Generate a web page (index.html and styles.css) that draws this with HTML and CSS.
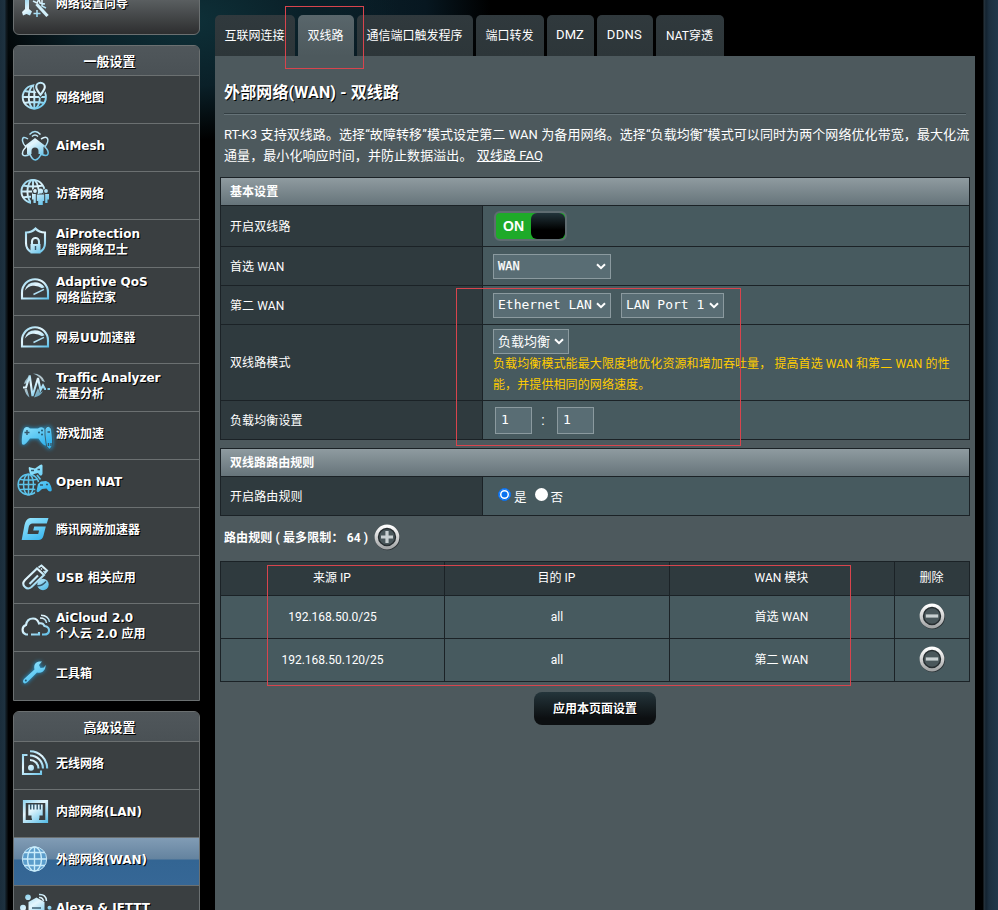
FILE: index.html
```html
<!DOCTYPE html>
<html lang="zh-CN">
<head>
<meta charset="utf-8">
<title>外部网络(WAN) - 双线路</title>
<link rel="stylesheet" href="styles.css">
</head>
<body>
<svg class="defs" width="0" height="0" aria-hidden="true">
  <defs>
    <linearGradient id="ice" gradientUnits="userSpaceOnUse" x1="24" y1="8" x2="42" y2="36">
      <stop offset="0" stop-color="#7fcdec"/><stop offset=".45" stop-color="#e4f6fd"/><stop offset="1" stop-color="#5cbfe8"/>
    </linearGradient>
    <linearGradient id="iceGlobe" gradientUnits="userSpaceOnUse" x1="-8" y1="-12" x2="8" y2="12">
      <stop offset="0" stop-color="#8fd3ee"/><stop offset=".45" stop-color="#dff4fc"/><stop offset="1" stop-color="#5cc4ec"/>
    </linearGradient>
    <linearGradient id="aqua" gradientUnits="userSpaceOnUse" x1="24" y1="8" x2="40" y2="36">
      <stop offset="0" stop-color="#a5ecff"/><stop offset="1" stop-color="#34b4ee"/>
    </linearGradient>
    <linearGradient id="steel" x1="0" y1="0" x2="0" y2="1">
      <stop offset="0" stop-color="#ffffff"/><stop offset="1" stop-color="#a4a6a7"/>
    </linearGradient>
    <symbol id="globe" viewBox="-14 -14 28 28">
      <circle r="11.6"/><ellipse rx="5.6" ry="11.6"/><path d="M0-11.6V11.6M-11.6 0H11.6M-10-6Q0-4 10-6M-10 6Q0 4 10 6"/>
    </symbol>
    <symbol id="gauge" viewBox="18 0 36 46">
      <path class="l2" d="M22 31.5V25.5A13 13.3 0 0 1 48 25.5V31.5Z"/>
      <path class="f" d="M24.8 23.5Q27 15.2 35 15.2Q41 15.2 44.6 20.2L42 21.2Q37.5 18.2 32.5 18.8Q28 19.5 24.8 23.5Z"/>
      <path class="l" d="M33.5 27.5L44 22.3"/>
    </symbol>
  </defs>
</svg>
<div class="page">
  <aside class="sidebar">
    <div class="quick">
      <svg class="ico" viewBox="18 0 36 46"><path class="f" d="M25 10H29V23L32 25.5L30 29.5L26.5 28L23 29.5L22 26L25 23Z"/><path class="w" d="M36.5 18L47.5 30"/><path class="l" d="M33 15L37 17L39 13L40 17L45 18M37 24V31M33.5 27.5H40.5M42 12V20L46 22"/></svg>
      <span>网络设置向导</span>
    </div>

    <nav class="menu">
      <h2>一般设置</h2>
      <a class="item"><svg class="ico" viewBox="18 0 36 46"><use class="gl" href="#globe" x="20.3" y="8" width="28" height="28"/><path class="pin" d="M40.5 23C36.5 18 34 15.5 34 12A6.5 6.5 0 0 1 47 12C47 15.5 44.5 18 40.5 23Z"/><path class="l2" d="M40.5 19.8C37.5 16 36.2 14 36.2 12A4.3 4.3 0 0 1 44.8 12C44.8 14 43.5 16 40.5 19.8Z"/></svg><span>网络地图</span></a>
      <a class="item"><svg class="ico" viewBox="18 0 36 46"><path class="l" d="M29.5 11.5Q35 5.5 40.5 11.5M32 13.5Q35 10.5 38 13.5"/><path class="l" d="M28 16Q22 12 22.5 18Q23 21 26 24Q21 29 23 32Q25 34 30 31Q32 37 35.5 37Q39 36 41 31Q47 34 48 31Q49 28 45 24Q49 18 47.5 15.5Q46 13 41 16"/><path class="f" d="M24.5 23L35 15L45.5 23L43.5 24V31H38.5V28A3.5 3.5 0 0 0 31.5 28V31H27V24Z"/></svg><span>AiMesh</span></a>
      <a class="item"><svg class="ico" viewBox="18 0 36 46"><use class="gl" href="#globe" x="19" y="6.5" width="28" height="28"/><g class="cut"><circle cx="35" cy="20.5" r="3"/><circle cx="46" cy="20.5" r="3"/><path d="M31 23H49V33H31Z"/></g><g class="f"><circle cx="35" cy="20" r="1.9"/><circle cx="46" cy="20" r="1.9"/><circle cx="40.5" cy="20" r="2.6"/><path d="M36.8 23.5H44.2V30H42.8V34H38.2V30H36.8ZM32 23H35.8V32H33.5V28.5H32ZM45.2 23H49V28.5H47.5V32H45.2Z"/></g></svg><span>访客网络</span></a>
      <a class="item"><svg class="ico" viewBox="18 0 36 46"><path class="l2" d="M31 33Q26 30 26 24V13.5Q32 13.5 35.5 9.5Q39 13.5 45 13.5V24Q45 30 40 33"/><path class="l2" d="M32 25V22.5A3.5 3.5 0 0 1 39 22.5V25"/><path class="f" d="M30.5 25H40.5V34.5H30.5Z"/><path class="dark" d="M35.5 27V31"/></svg><span>AiProtection<br>智能网络卫士</span></a>
      <a class="item"><svg class="ico"><use href="#gauge"/></svg><span>Adaptive QoS<br>网络监控家</span></a>
      <a class="item"><svg class="ico"><use href="#gauge"/></svg><span>网易UU加速器</span></a>
      <a class="item"><svg class="ico" viewBox="18 0 36 46"><path class="f dim" d="M33 10.5Q42 10.5 45 19L42 18Q40 13 33 10.5ZM24.5 26H27L29.5 34.5Q25 31 24.5 26ZM34 34.5L38 25L40 30L43 28Q41 33 34 34.5ZM28 14L25 18L24 21L27 20Z"/><path class="l2" d="M23 24.5H26L29.7 12.5L32.5 33L38 15L40.5 27L43 22.5L45 26H46M47.5 26H50"/></svg><span>Traffic Analyzer<br>流量分析</span></a>
      <a class="item"><svg class="ico glow" viewBox="18 0 36 46"><path class="a" d="M22 33C21.5 27 22.5 20 24.5 17Q27 15 30 17.5H38Q42 15 44.5 18C47 23 47 29 46.5 34Q44 36 38.5 27.5H30Q24 36 22 33Z"/><path class="a edge" d="M45 24V18Q48 12.5 51.5 18L52.5 28V34Q51 38 49.5 38Q46 37 46 32Z"/><path class="dark" d="M24.5 21.5H29.5M27 19V24M47.5 21H50M48.5 32V35M51 32V35"/><circle class="darkf" cx="39" cy="21.5" r="1"/><circle class="darkf" cx="42" cy="19.5" r="1"/><circle class="darkf" cx="42" cy="23.5" r="1"/></svg><span>游戏加速</span></a>
      <a class="item"><svg class="ico" viewBox="18 0 36 46"><use class="al" href="#globe" x="16" y="13" width="25" height="25"/><path class="cut" d="M36 24L46 20L52 33L35 34Z"/><path class="a" d="M29 11Q28 7 30.5 8.5L35 9.5L40 6Q43 4 42.5 8.5L42.5 15Q41 19 38 14L34 15Q30 18 29 11Z"/><path class="a" d="M38 25L41 22.5L46 22L49 23.5Q52.5 29 51.5 32Q49 33.5 46.5 29.5L42 30Q37.5 35 36.5 32Z"/><path class="al" d="M37 16L40.5 20.5"/><path class="dark" d="M31 11.5H34M37.5 10.5H40M40 26H43M46 25.5H48"/></svg><span>Open NAT</span></a>
      <a class="item"><svg class="ico" viewBox="18 0 36 46"><path class="g" d="M30 11H48.5L46.8 16.5H32.5Q29.5 16.5 28.7 20L27.5 27H38.2L39.1 23.5H33.2L34.2 19.5H45.8L43.4 29Q42.2 33 38.5 33H21.7L24.5 18Q25.7 12 30 11Z"/></svg><span>腾讯网游加速器</span></a>
      <a class="item"><svg class="ico" viewBox="18 0 36 46"><path class="l2" d="M25 25L37 13.5L44 20L31.5 32Q28 35 25 32Q21.5 29 25 25ZM38.5 12.5L41.5 10.5L47 15.5L44.5 18.5"/><path class="l2" d="M29.5 29L38 20.5"/><path class="l" d="M41 13.5L42 14.5M43.5 16L44.5 17"/><circle class="f" cx="43" cy="29.5" r="5.7"/><path class="dark" d="M36.5 30.5Q41 32 46 26.5"/></svg><span>USB 相关应用</span></a>
      <a class="item"><svg class="ico" viewBox="18 0 36 46"><path class="l2" d="M28 31.5H26A5 5 0 0 1 26 22Q27 15.5 33 15.5Q37.5 15.5 39 20.5Q43 19.5 44.5 23Q49.5 24 49 28Q48.5 31.5 44 31.5H42M31 31.5H39V29"/><path class="l" d="M40 15Q46 15 46.5 20M41 12.2Q48.5 12.5 49.5 19"/></svg><span>AiCloud 2.0<br>个人云 2.0 应用</span></a>
      <a class="item"><svg class="ico glow" viewBox="18 0 36 46"><path class="a" d="M24 28L34.5 18.5Q33 12 39 10.5L42 10.5L39 14L40.5 17L44 16.5L45.5 14Q46 18.5 43 20.5Q40 22.5 37 21.5L27.5 31Q25 33.5 23.3 31.5Q22.5 29.8 24 28Z"/><circle class="darkf" cx="25.8" cy="29.6" r="1"/></svg><span>工具箱</span></a>
    </nav>

    <nav class="menu last">
      <h2>高级设置</h2>
      <a class="item"><svg class="ico" viewBox="18 0 36 46"><path class="l2" d="M27.5 14H23V33H41V29.5"/><path class="l2" d="M30 10.3A17.2 17.2 0 0 1 47.2 27.5M30 14.5A13 13 0 0 1 43 27.5M30 19A8.5 8.5 0 0 1 38.5 27.5"/><circle class="f" cx="31" cy="26.8" r="3"/></svg><span>无线网络</span></a>
      <a class="item"><svg class="ico" viewBox="18 0 36 46"><path class="w2" d="M24.3 12.5H46.7V32.5H24.3Z"/><path class="f" d="M28.3 15.5H42.7V26.5H39.5V29.5H31.5V26.5H28.3Z"/><path class="dark" d="M30.7 15V20.5M33.8 15V20.5M37.2 15V20.5M40.3 15V20.5"/><path class="f" d="M32 29H39V33H32Z"/></svg><span>内部网络(LAN)</span></a>
      <a class="item active"><svg class="ico" viewBox="18 0 36 46"><circle class="disc" cx="34.5" cy="22" r="12.2"/><path class="net" d="M34.5 10V34M22.5 22H46.5M24 15.5H45M24 28.5H45"/><ellipse class="net" cx="34.5" cy="22" rx="7" ry="12"/></svg><span>外部网络(WAN)</span></a>
      <a class="item"><svg class="ico" viewBox="18 0 36 46"><circle class="f" cx="28" cy="12.3" r="2.8"/><circle class="f" cx="23" cy="22.8" r="3"/><circle class="f" cx="49.5" cy="22.8" r="2"/><path class="f" d="M28.5 17L36.5 12.5L44.5 17V30H28.5Z"/><path class="dark" d="M32 23H41"/><path class="l" d="M39 9.5Q46 9 46.5 16M39 12.5Q42.5 12 43.5 16"/></svg><span>Alexa &amp; IFTTT</span></a>
    </nav>
  </aside>

  <main class="main">
    <div class="tabs">
      <a class="tab t1">互联网连接</a><a class="tab t2 on">双线路</a><a class="tab t3">通信端口触发程序</a><a class="tab t4">端口转发</a><a class="tab t5">DMZ</a><a class="tab t6">DDNS</a><a class="tab t7">NAT穿透</a>
    </div>
    <section class="panel">
      <h1>外部网络(WAN) - 双线路</h1>
      <p class="desc">RT-K3 支持双线路。选择“故障转移”模式设定第二 WAN 为备用网络。选择“负载均衡”模式可以同时为两个网络优化带宽，最大化流<br>通量，最小化响应时间，并防止数据溢出。 <a class="faq">双线路 FAQ</a></p>

      <div class="form">
        <div class="head">基本设置</div>
        <div class="row r40"><div class="label">开启双线路</div><div class="val"><div class="switch"><span>ON</span><i></i></div></div></div>
        <div class="row r38"><div class="label">首选 WAN</div><div class="val"><div class="select s1 small">WAN<svg viewBox="0 0 10 7"><path d="M1 1.2L5 5.2L9 1.2"/></svg></div></div></div>
        <div class="row r38"><div class="label">第二 WAN</div><div class="val"><div class="select s1">Ethernet LAN<svg viewBox="0 0 10 7"><path d="M1 1.2L5 5.2L9 1.2"/></svg></div><div class="select s2">LAN Port 1<svg viewBox="0 0 10 7"><path d="M1 1.2L5 5.2L9 1.2"/></svg></div></div></div>
        <div class="row r75"><div class="label">双线路模式</div><div class="val col"><div class="select s3">负载均衡<svg viewBox="0 0 10 7"><path d="M1 1.2L5 5.2L9 1.2"/></svg></div><p class="hint">负载均衡模式能最大限度地优化资源和增加吞吐量， 提高首选 WAN 和第二 WAN 的性<br>能，并提供相同的网络速度。</p></div></div>
        <div class="row r38"><div class="label">负载均衡设置</div><div class="val ratio"><div class="num">1</div><b>:</b><div class="num">1</div></div></div>
      </div>

      <div class="form second">
        <div class="head">双线路路由规则</div>
        <div class="row r38"><div class="label">开启路由规则</div><div class="val radios"><i class="radio checked"></i><span>是</span><i class="radio"></i><span>否</span></div></div>
      </div>

      <div class="caption"><span>路由规则 ( 最多限制： 64 )</span>
        <svg class="round" viewBox="0 0 28 28"><circle class="shade" cx="14.6" cy="14.8" r="11.6"/><circle class="inner" cx="14" cy="14" r="10"/><circle class="ring" cx="14" cy="14" r="10.8"/><path class="mark" d="M8 14H20M14 8V20"/></svg>
      </div>

      <div class="rules">
        <div class="rr rh"><div>来源 IP</div><div>目的 IP</div><div>WAN 模块</div><div>删除</div></div>
        <div class="rr"><div class="lat">192.168.50.0/25</div><div class="lat">all</div><div>首选 WAN</div><div><svg class="round" viewBox="0 0 28 28"><circle class="shade" cx="14.6" cy="14.8" r="11.6"/><circle class="inner" cx="14" cy="14" r="10"/><circle class="ring" cx="14" cy="14" r="10.8"/><path class="mark" d="M7.8 14H20.2"/></svg></div></div>
        <div class="rr"><div class="lat">192.168.50.120/25</div><div class="lat">all</div><div>第二 WAN</div><div><svg class="round" viewBox="0 0 28 28"><circle class="shade" cx="14.6" cy="14.8" r="11.6"/><circle class="inner" cx="14" cy="14" r="10"/><circle class="ring" cx="14" cy="14" r="10.8"/><path class="mark" d="M7.8 14H20.2"/></svg></div></div>
      </div>
      <div class="apply">应用本页面设置</div>
    </section>
  </main>
  <div class="note n1"></div>
  <div class="note n2"></div>
  <div class="note n3"></div>
</div>
</body>
</html>
```
FILE: styles.css
```css
* { box-sizing: border-box; margin: 0; padding: 0; }
html, body { height: 910px; overflow: hidden; background: #1c2f3c; }
body { font-family: Roboto, "Noto Sans CJK SC", sans-serif; font-size: 12px; color: #fff; }
.defs { position: absolute; }
.page {
  position: relative; width: 998px; height: 910px; overflow: hidden; display: flex;
  padding-left: 13px; gap: 15px;
  background:
    linear-gradient(90deg, #1a2d3b 0, #1e3240 5px, #0d161c 6px, #10181d 7px, transparent 8px, transparent 983px, #27343d 984px, #142330 986px, #1c2f3f 989px, #20374a 998px),
    radial-gradient(ellipse 210px 120px at 190px 20px, #0e3038 0, #0a2028 55%, transparent 100%),
    radial-gradient(ellipse 160px 120px at 330px 10px, #0a1f28 0, #071720 60%, transparent 100%),
    #000;
}

/* sidebar */
.sidebar { width: 187px; font-family: "DejaVu Sans", "Noto Sans CJK SC", sans-serif; font-weight: 700; text-shadow: 1px 1px 0 #000; }
.quick { height: 55px; margin-top: -20px; border: 1px solid #6b7071; border-radius: 6px; display: flex; background: linear-gradient(#5e6365 30%, #2d2e2f); }
.quick .ico { margin-top: 5px; }
.quick span { line-height: 18px; margin-top: 14px; }
.menu { margin-top: 10px; border: 1px solid #6b7071; border-radius: 6px 6px 0 0; background: #3a3f41; overflow: hidden; }
.menu h2 { height: 30px; line-height: 32px; font-size: 13px; text-align: center; padding-left: 6px; background: linear-gradient(#50575b, #4a5155); border-bottom: 1px solid #6b7071; }
.item { display: flex; height: 48px; border-bottom: 1px solid #6b7071; line-height: 16px; }
.item:last-child { border-bottom: 0; }
.item span { height: 43px; display: flex; flex-direction: column; justify-content: center; white-space: nowrap; }
.item span, .quick span { font-size: 12px; }
.ico { width: 36px; height: 46px; margin: -1px 2px 0 4px; flex: none; overflow: visible; fill: none; }
.active { background: linear-gradient(#819cb5 0, #64839f 21px, #336593 22px, #366796 100%); }
.l, .l2 { fill: none; stroke: url(#ice); stroke-width: 1.5; }
.l2 { stroke-width: 2.1; }
.gl { stroke: url(#iceGlobe); stroke-width: 1.9; }
.f { fill: url(#ice); }
.dim { opacity: .75; }
.w { stroke: #d2f0fb; stroke-width: 3.2; }
.w2 { stroke: url(#ice); stroke-width: 2.8; }
.a { fill: url(#aqua); }
.al { stroke: #5cc3ea; stroke-width: 1.7; }
.edge { stroke: #3a3f41; stroke-width: .7; }
.g { fill: url(#aqua); }
.cut, .pin { fill: #3a3f41; }
.dark { stroke: #34566a; stroke-width: 1.4; }
.darkf { fill: #245a74; }
.glow { filter: drop-shadow(0 0 2px #1c9ddb); }
.disc { fill: #5b9dcb; stroke: #c3e5f6; stroke-width: 1; }
.net { stroke: #c9ecfb; stroke-width: 1.4; }

/* tabs */
.main { width: 760px; }
.tabs { display: flex; gap: 3px; height: 56px; padding-top: 15px; }
.tab { height: 41px; line-height: 41px; padding-right: 1px; text-align: center; white-space: nowrap; border-radius: 5px 5px 0 0; background: linear-gradient(#30393d, #2d3639); font-size: 12px; font-weight: 400; }
.tab.on { background: linear-gradient(#59666b, #4d595d); }
.t1 { width: 80px; } .t2 { width: 56px; } .t3 { width: 116px; } .t4 { width: 68px; }
.t5 { width: 47px; } .t6 { width: 56px; } .t7 { width: 68px; }
.tab.t5, .tab.t6 { font-size: 13px; line-height: 39px; }
.tab.t5 { letter-spacing: .1px; }
.tab.t6 { letter-spacing: .3px; }
.tab.t1, .tab.t2, .tab.t3, .tab.t4, .tab.t7 { line-height: 42px; }

/* panel */
.panel { height: 854px; padding: 0 5px; background: #4d595d; }
h1 { margin: 0 4px; height: 59px; padding-top: 25px; line-height: 24px; font-size: 16px; letter-spacing: .13px; font-weight: 700; text-shadow: 1px 1px 0 #000; border-bottom: 1px solid #667378; box-shadow: inset 0 -1px 0 #333e42; }
.desc { margin: 9px 0 0 4px; line-height: 21px; height: 43px; font-size: 13px; letter-spacing: .08px; white-space: nowrap; }
.faq { text-decoration: underline; margin-left: 1px; }
.form { width: 750px; margin-top: 10px; border: 1px solid #1b2226; }
.form .head { height: 27px; line-height: 28px; padding-left: 9px; font-weight: 700; letter-spacing: .05px; background: linear-gradient(#8f9ba0, #66747a); }
.row { display: flex; border-top: 1px solid #1b2226; box-sizing: content-box; }
.r40 { height: 40px; } .r38 { height: 38px; } .r75 { height: 75px; }
.label { width: 262px; padding: 0 0 2px 9px; letter-spacing: .1px; display: flex; align-items: center; background: #2f3a3e; border-right: 1px solid #1b2226; }
.val { flex: 1; padding-left: 10px; display: flex; align-items: center; gap: 10px; background: #475a5f; }
.val.col { display: block; padding-top: 4px; }
.select { height: 25px; border: 1px solid #8b9a9f; background: #596d74; display: flex; align-items: center; justify-content: space-between; padding: 0 4px 1px 4px; font: 13px "DejaVu Sans Mono", "Noto Sans CJK SC", monospace; white-space: nowrap; }
.select svg { width: 10px; height: 7px; margin-top: 1px; fill: none; stroke: #fff; stroke-width: 2; }
.small { font-size: 12px; padding-bottom: 0; -webkit-text-stroke: .25px #fff; }
.s1 { width: 118px; } .s2 { width: 103px; } .s3 { width: 76px; padding-bottom: 3px; }
.s3 svg { margin-top: 3px; }
.hint { color: #fc0; line-height: 21px; letter-spacing: .1px; white-space: nowrap; }
.switch { margin-left: 1px; width: 73px; height: 30px; border: 2px solid #5f6c71; border-radius: 6px; display: flex; background: #1eaa29; overflow: hidden; }
.switch span { width: 35px; text-align: center; font: 700 14px/27px "Liberation Sans", sans-serif; }
.switch i { flex: 1; border-radius: 6px; background: linear-gradient(#22343b, #000 65%); }
.ratio { padding-left: 12px; gap: 0; }
.num { width: 37px; height: 27px; border: 1px solid #8b9a9f; background: #596d74; padding-left: 5px; font: 13px/23px "DejaVu Sans Mono", monospace; }
.ratio b { width: 25px; padding-right: 3px; text-align: center; font-weight: 400; font-size: 14px; }
.second { margin-top: 8px; }
.radios { gap: 0; padding-left: 15px; padding-bottom: 4px; }
.radios span { margin: 5px 8px 0 3px; font-size: 12.5px; }
.radio { width: 13px; height: 13px; border-radius: 50%; background: #fff; }
.checked { background: #0b72f0; border: 1px solid #fff; outline: 0; box-shadow: inset 0 0 0 1px #0b72f0, inset 0 0 0 2.5px #fff; border-color: #0b72f0; }
.caption { height: 45px; padding: 0 0 4px 4px; display: flex; align-items: center; gap: 5px; font-weight: 700; letter-spacing: .12px; }
.round { width: 28px; height: 28px; fill: none; display: block; }
.shade { stroke: #2b3236; stroke-width: 1.6; }
.inner { fill: #4a575b; stroke: #272e31; stroke-width: 4.4; }
.ring { stroke: url(#steel); stroke-width: 3.2; }
.mark { stroke: #c9d0d2; stroke-width: 3.2; }
.rules { width: 750px; border: 1px solid #1b2226; border-bottom: 0; }
.rr { display: grid; grid-template-columns: 224px 225px 225px 74px; height: 43px; background: #475a5f; border-bottom: 1px solid #1b2226; }
.rr > div { display: flex; align-items: center; justify-content: center; border-right: 1px solid #1b2226; padding: 0 1px 3px 0; }
.rr > div.lat { padding: 0; }
.rr > div:last-child { border-right: 0; }
.rh { height: 34px; background: #2f3a3e; }
.rr.rh > div { padding-bottom: 4px; }
.apply { width: 122px; height: 33px; margin: 10px auto 0; line-height: 35px; text-align: center; font-weight: 700; border-radius: 8px; background: linear-gradient(#24353b, #0c0f11 80%); text-shadow: 1px 1px 0 #000; }

/* callout frames */
.note { position: absolute; border: 1px solid #d8444d; pointer-events: none; }
.n1 { left: 285px; top: 6px; width: 79px; height: 63px; }
.n2 { left: 456px; top: 288px; width: 285px; height: 158px; }
.n3 { left: 267px; top: 565px; width: 584px; height: 121px; }
```
